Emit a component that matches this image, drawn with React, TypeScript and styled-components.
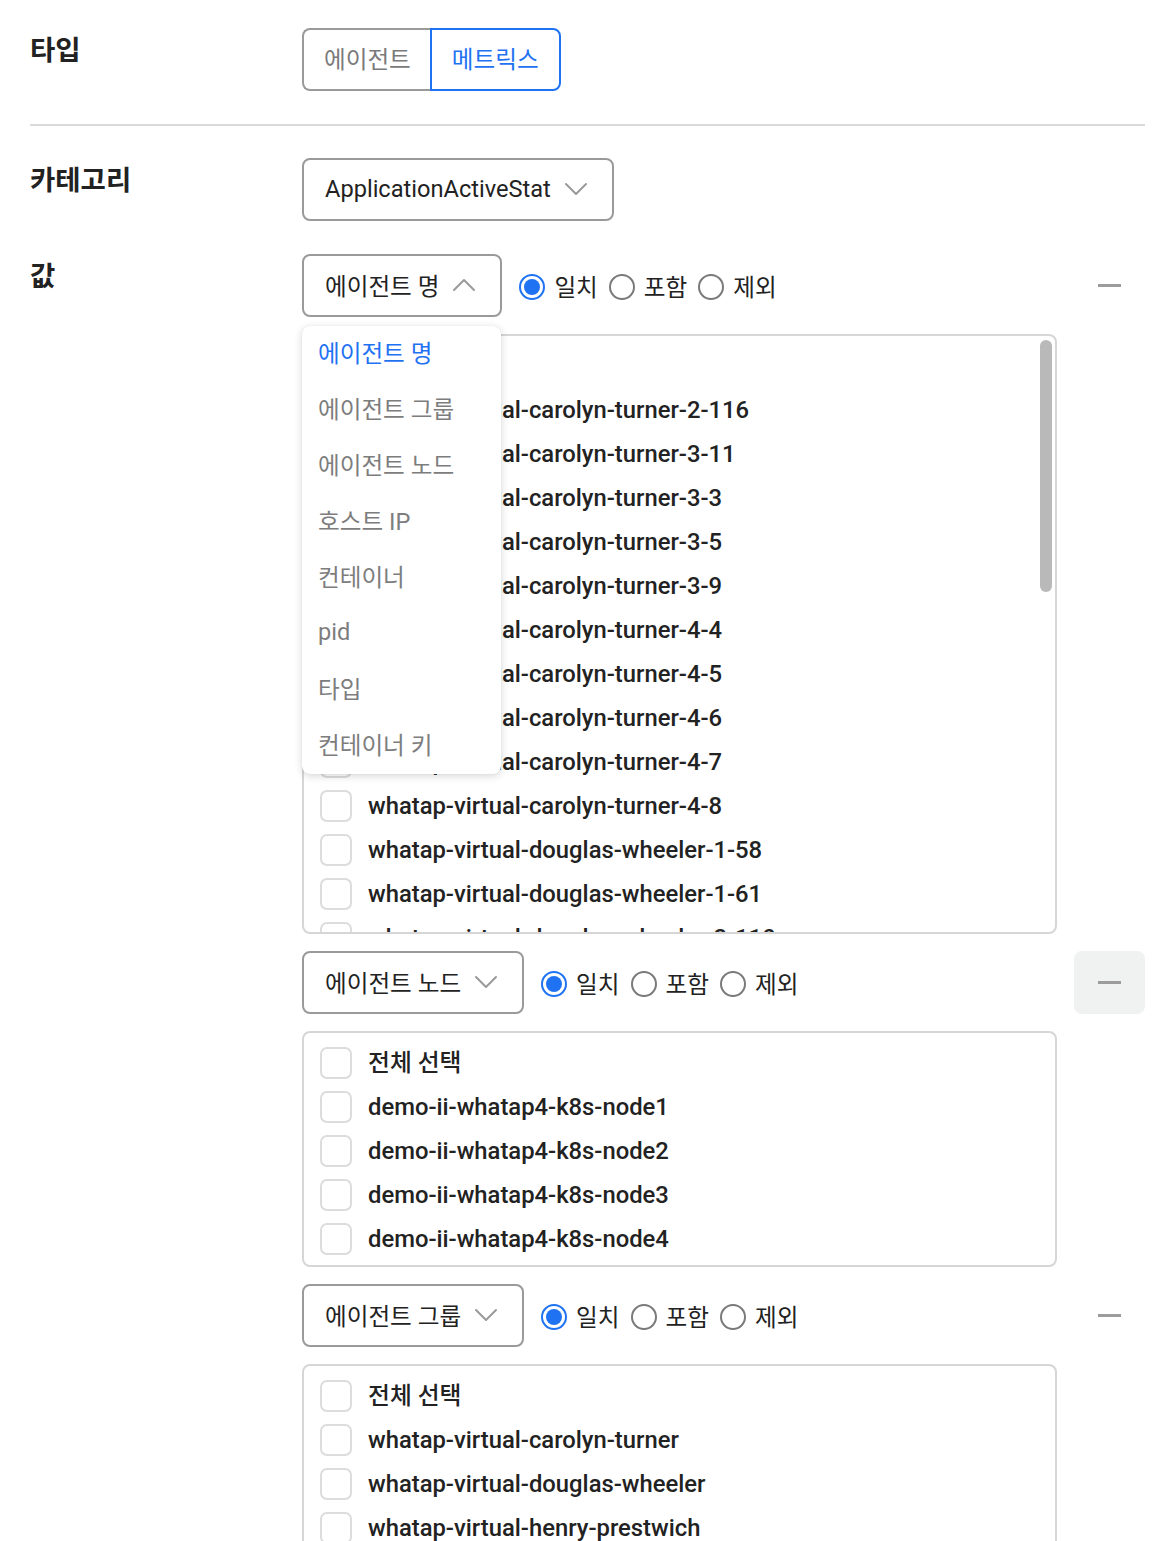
import React from "react";
import styled, { createGlobalStyle, css } from "styled-components";

const BLUE = "#1f72f2";

const GlobalStyle = createGlobalStyle`
  html, body { margin: 0; padding: 0; background: #fff; }
  body {
    font-family: "Roboto", "Noto Sans CJK KR", "Noto Sans", sans-serif;
    color: #222;
  }
  * { box-sizing: border-box; }
`;

const Page = styled.div`
  width: 1155px;
  padding: 28px 10px 0 30px;
`;

const FieldRow = styled.div<{ $mt?: number }>`
  display: grid;
  grid-template-columns: 272px 1fr;
  margin-top: ${(p) => p.$mt ?? 0}px;
`;

const Label = styled.div`
  font-family: "Noto Sans CJK KR", sans-serif;
  font-size: 27.5px;
  font-weight: 600;
  line-height: 40px;
  color: #222;
`;

const Divider = styled.div`
  height: 2px;
  background: #dadada;
  margin: 33px 0 32px;
`;

const ToggleGroup = styled.div`
  display: flex;
  height: 63px;
`;

const ToggleButton = styled.button<{ $active?: boolean; $first?: boolean }>`
  height: 63px;
  padding: 0 20px 3px;
  font-family: "Noto Sans CJK KR", sans-serif;
  font-size: 23.6px;
  background: #fff;
  cursor: pointer;
  ${(p) =>
    p.$active
      ? css`
          border: 2px solid ${BLUE};
          color: ${BLUE};
        `
      : css`
          border: 2px solid #9a9a9a;
          color: #7a7a7a;
        `}
  ${(p) =>
    p.$first
      ? css`
          border-right: none;
          border-radius: 8px 0 0 8px;
          padding-right: 19px;
        `
      : css`
          border-radius: 0 8px 8px 0;
        `}
`;

const SelectWrap = styled.div`
  position: relative;
`;

const SelectBox = styled.div`
  height: 63px;
  display: inline-flex;
  align-items: center;
  gap: 13px;
  padding: 0 24px 2px 21px;
  border: 2px solid #9a9a9a;
  border-radius: 8px;
  font-size: 23.6px;
  color: #222;
  background: #fff;
  white-space: nowrap;
`;

const Chevron = ({ up }: { up?: boolean }) => (
  <svg width="24" height="14" viewBox="0 0 24 14" fill="none">
    <polyline
      points={up ? "2,12 12,2 22,12" : "2,2 12,12 22,2"}
      stroke="#9a9a9a"
      strokeWidth="2"
      strokeLinecap="round"
      strokeLinejoin="round"
    />
  </svg>
);

const ValueColumn = styled.div`
  display: flex;
  flex-direction: column;
  gap: 17px;
`;

const FilterRow = styled.div`
  display: flex;
  align-items: center;
  height: 63px;
`;

const RadioGroup = styled.div`
  display: flex;
  align-items: center;
  margin-left: 17px;
  gap: 11px;
`;

const RadioItem = styled.label`
  display: flex;
  align-items: center;
  gap: 9px;
  font-family: "Noto Sans CJK KR", sans-serif;
  font-size: 23.6px;
  line-height: 32px;
  color: #222;
`;

const RadioCircle = styled.span<{ $checked?: boolean }>`
  width: 26px;
  height: 26px;
  margin-top: 2px;
  border-radius: 50%;
  border: 2px solid ${(p) => (p.$checked ? BLUE : "#7a7a7a")};
  display: flex;
  align-items: center;
  justify-content: center;
  &::after {
    content: "";
    width: 16px;
    height: 16px;
    border-radius: 50%;
    background: ${(p) => (p.$checked ? BLUE : "transparent")};
  }
`;

const RemoveButton = styled.button<{ $hover?: boolean }>`
  margin-left: auto;
  width: 71px;
  height: 63px;
  border: none;
  border-radius: 8px;
  background: ${(p) => (p.$hover ? "#f0f1f1" : "transparent")};
  display: flex;
  align-items: center;
  justify-content: center;
  cursor: pointer;
  &::after {
    content: "";
    width: 23px;
    height: 3px;
    background: #9c9c9c;
  }
`;

const ListBox = styled.div<{ $height?: number }>`
  position: relative;
  width: 755px;
  ${(p) => (p.$height ? `height: ${p.$height}px;` : "")}
  border: 2px solid #d6d6d6;
  border-radius: 8px;
  padding: 14px 16px 10px;
  display: flex;
  flex-direction: column;
  gap: 12px;
  overflow: hidden;
`;

const ListItem = styled.label`
  display: flex;
  align-items: center;
  gap: 16px;
  min-height: 32px;
  font-size: 23.8px;
  font-weight: 500;
  color: #222;
  white-space: nowrap;
  line-height: 32px;
`;

const CheckBox = styled.span`
  flex: none;
  width: 32px;
  height: 32px;
  border: 2px solid #dcdcdc;
  border-radius: 7px;
  background: #fff;
`;

const ScrollThumb = styled.div`
  position: absolute;
  top: 4px;
  right: 3px;
  width: 12px;
  height: 252px;
  border-radius: 6px;
  background: #b9b9b9;
`;

const Menu = styled.div`
  position: absolute;
  top: 72px;
  left: 0;
  width: 199px;
  background: #fff;
  border-radius: 8px;
  box-shadow: 0 2px 8px rgba(0, 0, 0, 0.16), 0 0 1px rgba(0, 0, 0, 0.12);
  z-index: 10;
  padding: 0;
`;

const MenuItem = styled.div<{ $active?: boolean }>`
  height: 56px;
  display: flex;
  align-items: center;
  padding: 0 16px 5px;
  font-family: "Roboto", "Noto Sans CJK KR", sans-serif;
  font-size: 23.6px;
  white-space: nowrap;
  color: ${(p) => (p.$active ? BLUE : "#7d7d7d")};
`;

const Radios = () => (
  <RadioGroup>
    <RadioItem>
      <RadioCircle $checked />
      일치
    </RadioItem>
    <RadioItem>
      <RadioCircle />
      포함
    </RadioItem>
    <RadioItem>
      <RadioCircle />
      제외
    </RadioItem>
  </RadioGroup>
);

const agentNames = [
  "전체 선택",
  "whatap-virtual-carolyn-turner-2-116",
  "whatap-virtual-carolyn-turner-3-11",
  "whatap-virtual-carolyn-turner-3-3",
  "whatap-virtual-carolyn-turner-3-5",
  "whatap-virtual-carolyn-turner-3-9",
  "whatap-virtual-carolyn-turner-4-4",
  "whatap-virtual-carolyn-turner-4-5",
  "whatap-virtual-carolyn-turner-4-6",
  "whatap-virtual-carolyn-turner-4-7",
  "whatap-virtual-carolyn-turner-4-8",
  "whatap-virtual-douglas-wheeler-1-58",
  "whatap-virtual-douglas-wheeler-1-61",
  "whatap-virtual-douglas-wheeler-2-110",
  "whatap-virtual-douglas-wheeler-2-112",
];

const nodes = [
  "전체 선택",
  "demo-ii-whatap4-k8s-node1",
  "demo-ii-whatap4-k8s-node2",
  "demo-ii-whatap4-k8s-node3",
  "demo-ii-whatap4-k8s-node4",
];

const groups = [
  "전체 선택",
  "whatap-virtual-carolyn-turner",
  "whatap-virtual-douglas-wheeler",
  "whatap-virtual-henry-prestwich",
  "whatap-virtual-jessica-miller",
];

const menuItems = [
  "에이전트 명",
  "에이전트 그룹",
  "에이전트 노드",
  "호스트 IP",
  "컨테이너",
  "pid",
  "타입",
  "컨테이너 키",
];

const List = ({ items }: { items: string[] }) => (
  <>
    {items.map((it) => (
      <ListItem key={it}>
        <CheckBox />
        {it}
      </ListItem>
    ))}
  </>
);

export default function App() {
  return (
    <>
      <GlobalStyle />
      <Page>
        <FieldRow>
          <Label>타입</Label>
          <ToggleGroup>
            <ToggleButton $first>에이전트</ToggleButton>
            <ToggleButton $active>메트릭스</ToggleButton>
          </ToggleGroup>
        </FieldRow>
        <Divider />
        <FieldRow>
          <Label>카테고리</Label>
          <div>
            <SelectBox>
              ApplicationActiveStat
              <Chevron />
            </SelectBox>
          </div>
        </FieldRow>
        <FieldRow $mt={33}>
          <Label>값</Label>
          <ValueColumn>
            <FilterRow>
              <SelectWrap>
                <SelectBox>
                  에이전트 명
                  <Chevron up />
                </SelectBox>
                <Menu>
                  {menuItems.map((m, i) => (
                    <MenuItem key={m} $active={i === 0}>
                      {m}
                    </MenuItem>
                  ))}
                </Menu>
              </SelectWrap>
              <Radios />
              <RemoveButton />
            </FilterRow>
            <ListBox $height={600}>
              <List items={agentNames} />
              <ScrollThumb />
            </ListBox>

            <FilterRow>
              <SelectWrap>
                <SelectBox>
                  에이전트 노드
                  <Chevron />
                </SelectBox>
              </SelectWrap>
              <Radios />
              <RemoveButton $hover />
            </FilterRow>
            <ListBox>
              <List items={nodes} />
            </ListBox>

            <FilterRow>
              <SelectWrap>
                <SelectBox>
                  에이전트 그룹
                  <Chevron />
                </SelectBox>
              </SelectWrap>
              <Radios />
              <RemoveButton />
            </FilterRow>
            <ListBox>
              <List items={groups} />
            </ListBox>
          </ValueColumn>
        </FieldRow>
      </Page>
    </>
  );
}
